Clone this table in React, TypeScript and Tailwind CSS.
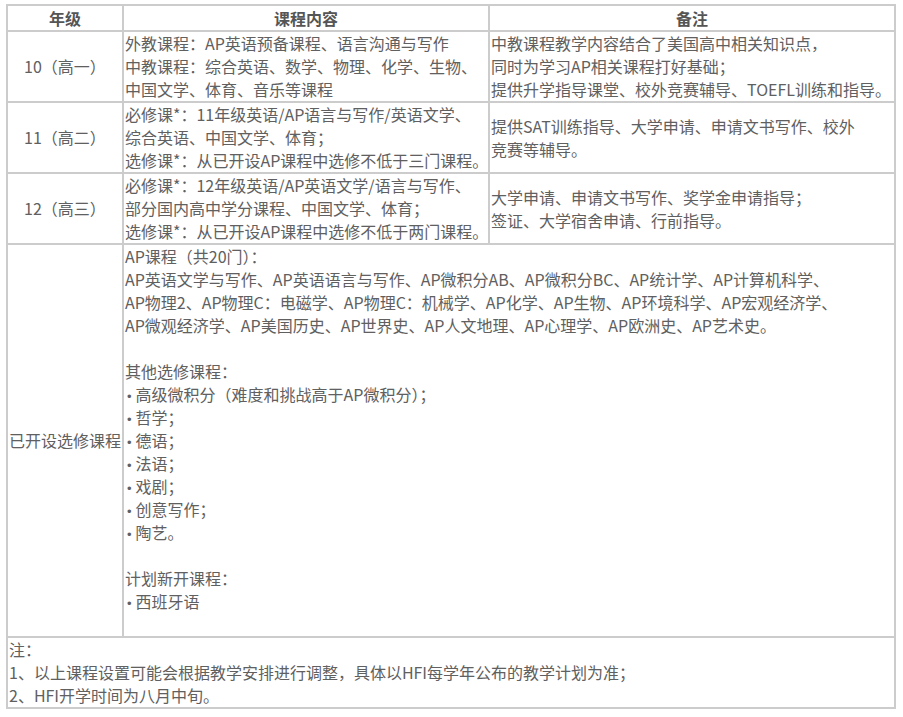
const font = '"Microsoft YaHei", "Noto Sans CJK SC", "Liberation Sans", sans-serif';

const cell = 'border-2 border-[#cccccc] p-0 align-middle';

function Lines({ lines }: { lines: string[] }) {
  return (
    <>
      {lines.map((l, i) => (
        <div key={i} className="whitespace-nowrap h-[23px]">
          {l === '' ? (
            '\u00a0'
          ) : l.startsWith('• ') ? (
            <>
              <span className="pl-[2px] pr-[4px] font-['Liberation_Sans'] text-[13px]">•</span>
              {l.slice(2)}
            </>
          ) : (
            l
          )}
        </div>
      ))}
    </>
  );
}

const rows = [
  {
    grade: '10（高一）',
    course: [
      '外教课程：AP英语预备课程、语言沟通与写作',
      '中教课程：综合英语、数学、物理、化学、生物、',
      '中国文学、体育、音乐等课程',
    ],
    note: [
      '中教课程教学内容结合了美国高中相关知识点，',
      '同时为学习AP相关课程打好基础；',
      '提供升学指导课堂、校外竞赛辅导、TOEFL训练和指导。',
    ],
  },
  {
    grade: '11（高二）',
    course: [
      '必修课*：11年级英语/AP语言与写作/英语文学、',
      '综合英语、中国文学、体育；',
      '选修课*：从已开设AP课程中选修不低于三门课程。',
    ],
    note: ['提供SAT训练指导、大学申请、申请文书写作、校外', '竞赛等辅导。'],
  },
  {
    grade: '12（高三）',
    course: [
      '必修课*：12年级英语/AP英语文学/语言与写作、',
      '部分国内高中学分课程、中国文学、体育；',
      '选修课*：从已开设AP课程中选修不低于两门课程。',
    ],
    note: ['大学申请、申请文书写作、奖学金申请指导；', '签证、大学宿舍申请、行前指导。'],
  },
];

const electives = [
  'AP课程（共20门）：',
  'AP英语文学与写作、AP英语语言与写作、AP微积分AB、AP微积分BC、AP统计学、AP计算机科学、',
  'AP物理2、AP物理C：电磁学、AP物理C：机械学、AP化学、AP生物、AP环境科学、AP宏观经济学、',
  'AP微观经济学、AP美国历史、AP世界史、AP人文地理、AP心理学、AP欧洲史、AP艺术史。',
  '',
  '其他选修课程：',
  '• 高级微积分（难度和挑战高于AP微积分）；',
  '• 哲学；',
  '• 德语；',
  '• 法语；',
  '• 戏剧；',
  '• 创意写作；',
  '• 陶艺。',
  '',
  '计划新开课程：',
  '• 西班牙语',
  '',
];

export default function App() {
  return (
    <div className="bg-white min-h-screen pl-[6px] pt-[4px]" style={{ fontFamily: font }}>
      <table className="border-collapse table-fixed w-[888px] text-[16px] leading-[23px] text-[#606060]">
        <colgroup>
          <col className="w-[116px]" />
          <col className="w-[366px]" />
          <col className="w-[406px]" />
        </colgroup>
        <thead>
          <tr>
            <th className={`${cell} text-center font-bold text-[#555555] h-[26px]`}>年级</th>
            <th className={`${cell} text-center font-bold text-[#555555]`}>课程内容</th>
            <th className={`${cell} text-center font-bold text-[#555555]`}>备注</th>
          </tr>
        </thead>
        <tbody>
          {rows.map((r) => (
            <tr key={r.grade}>
              <td className={`${cell} text-center`}>{r.grade}</td>
              <td className={`${cell} pl-px`}>
                <Lines lines={r.course} />
              </td>
              <td className={`${cell} pl-px`}>
                <Lines lines={r.note} />
              </td>
            </tr>
          ))}
          <tr>
            <td className={`${cell} pl-px whitespace-nowrap`}>已开设选修课程</td>
            <td className={`${cell} pl-px`} colSpan={2}>
              <Lines lines={electives} />
            </td>
          </tr>
          <tr>
            <td className={`${cell} pl-px`} colSpan={3}>
              <Lines
                lines={[
                  '注：',
                  '1、以上课程设置可能会根据教学安排进行调整，具体以HFI每学年公布的教学计划为准；',
                  '2、HFI开学时间为八月中旬。',
                ]}
              />
            </td>
          </tr>
        </tbody>
      </table>
    </div>
  );
}
